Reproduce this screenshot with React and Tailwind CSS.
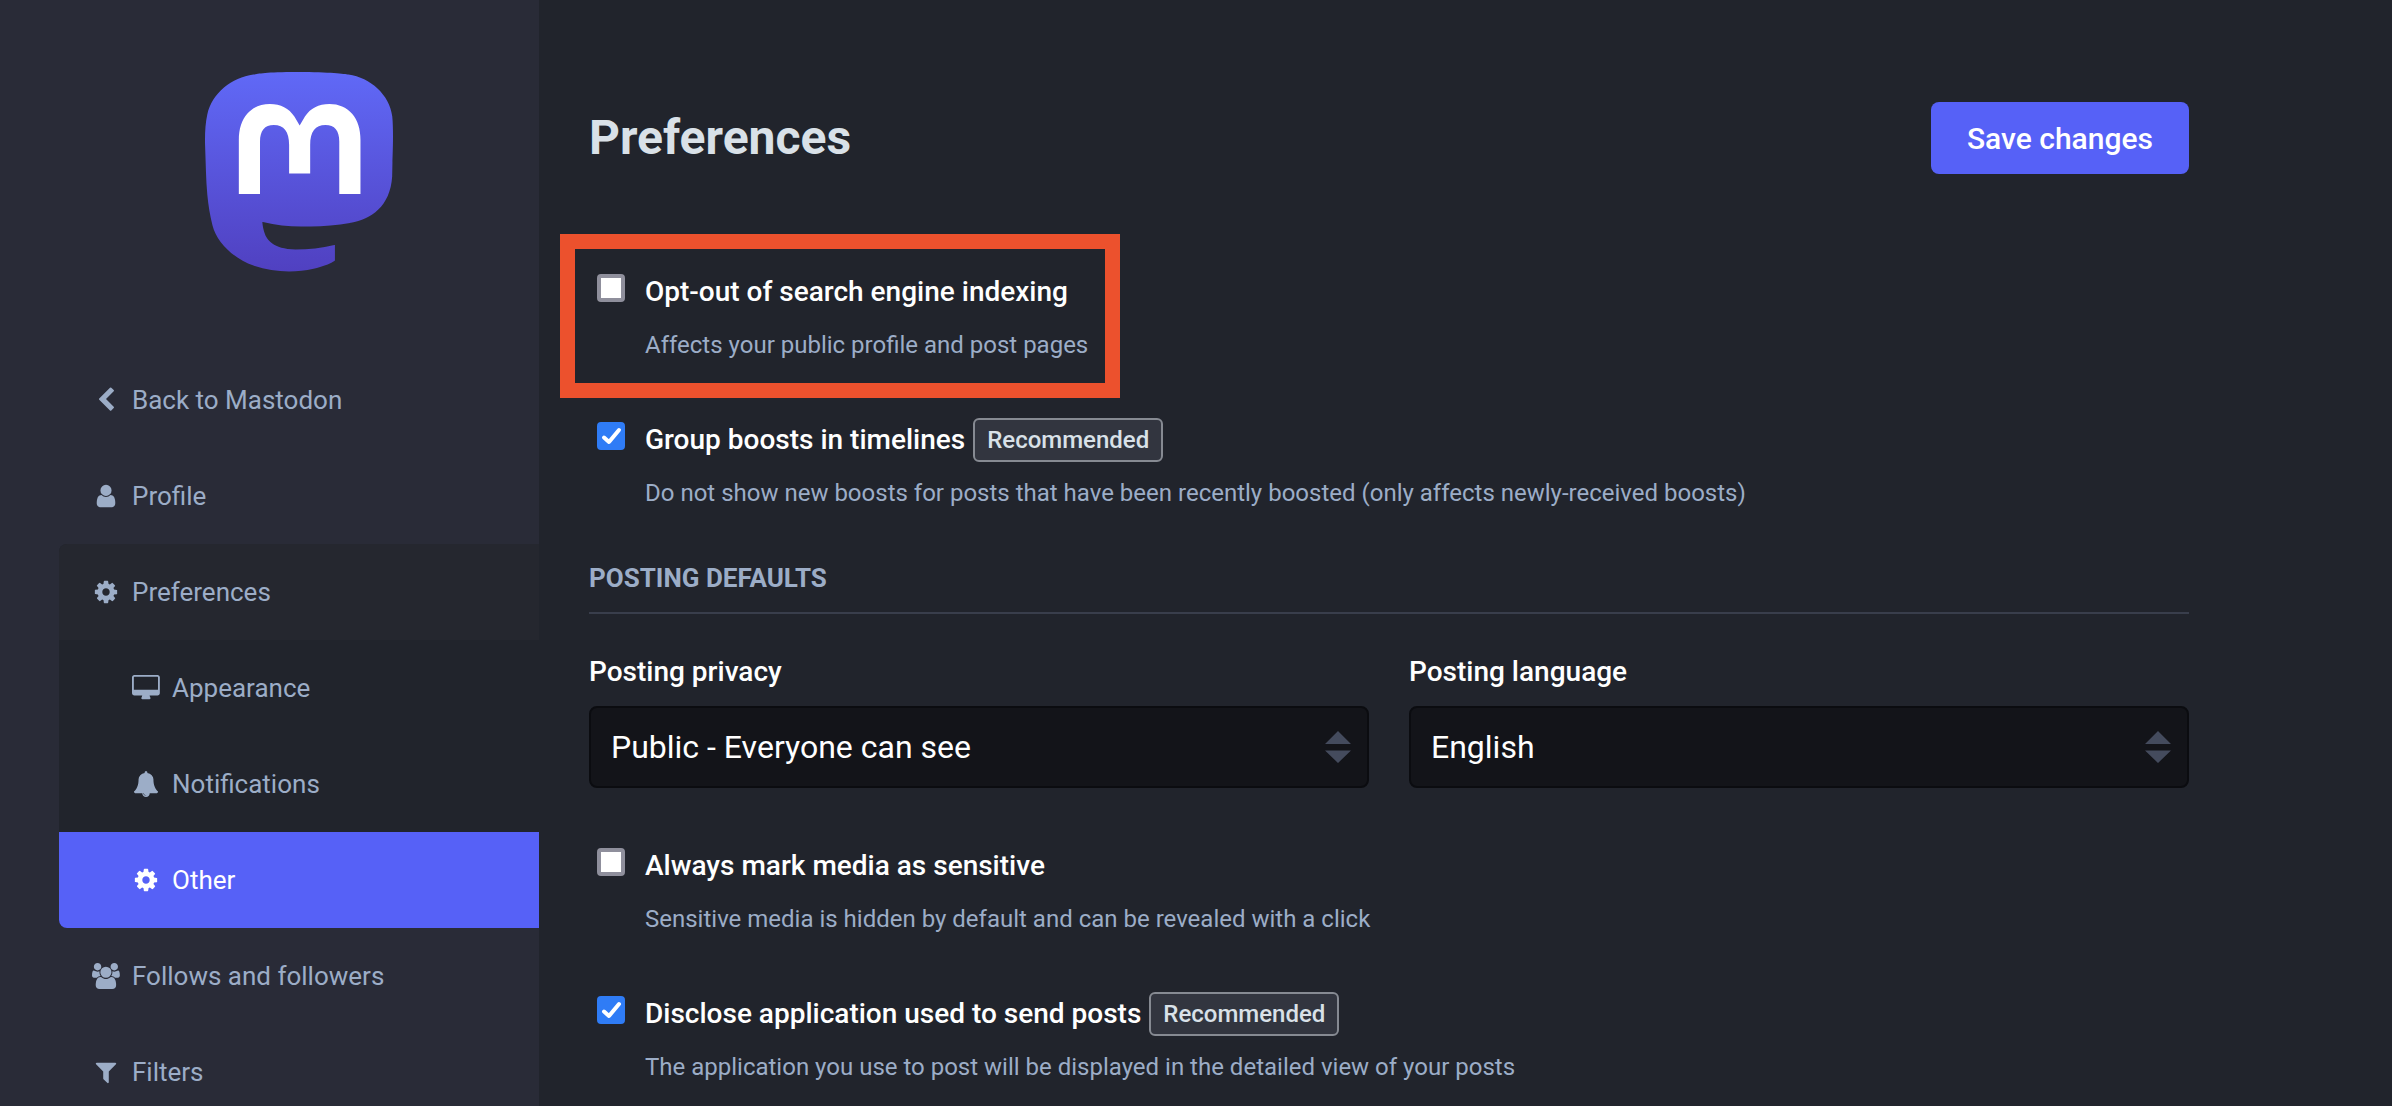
import { useId } from "react";

const icons = {
  back: {
    box: "0 0 1792 1792",
    d: "M1427 301l-531 531 531 531q19 19 19 45t-19 45l-166 166q-19 19-45 19t-45-19l-742-742q-19-19-19-45t19-45l742-742q19-19 45-19t45 19l166 166q19 19 19 45t-19 45z",
  },
  user: {
    box: "0 0 1792 1792",
    d: "M1536 1399q0 109-62.5 187t-150.5 78h-854q-88 0-150.5-78t-62.5-187q0-85 8.5-160.5t31.5-152 58.5-131 94-89 134.5-34.5q131 128 313 128t313-128q76 0 134.5 34.5t94 89 58.5 131 31.5 152 8.5 160.5zm-256-887q0 159-112.5 271.5t-271.5 112.5-271.5-112.5-112.5-271.5 112.5-271.5 271.5-112.5 271.5 112.5 112.5 271.5z",
  },
  cog: {
    box: "0 0 1792 1792",
    d: "M1152 896q0-106-75-181t-181-75-181 75-75 181 75 181 181 75 181-75 75-181zm512-109v222q0 12-8 23t-20 13l-185 28q-19 54-39 91 35 50 107 138 10 12 10 25t-9 23q-27 37-99 108t-94 71q-12 0-26-9l-138-108q-44 23-91 38-16 136-29 186-7 28-36 28h-222q-14 0-24.5-8.5t-11.5-21.5l-28-184q-49-16-90-37l-141 107q-10 9-25 9-14 0-25-11-126-114-165-168-7-10-7-23 0-12 8-23 15-21 51-66.5t54-70.5q-27-50-41-99l-183-27q-13-2-21-12.5t-8-23.5v-222q0-12 8-23t19-13l186-28q14-46 39-92-40-57-107-138-10-12-10-24 0-10 9-23 26-36 98.5-107.5t94.5-71.5q13 0 26 10l138 107q44-23 91-38 16-136 29-186 7-28 36-28h222q14 0 24.5 8.5t11.5 21.5l28 184q49 16 90 37l142-107q9-9 24-9 13 0 25 10 129 119 165 170 7 8 7 22 0 12-8 23-15 21-51 66.5t-54 70.5q26 50 41 98l183 28q13 2 21 12.5t8 23.5z",
  },
  desktop: {
    box: "-64 0 1920 1792",
    d: "M1728 992v-832q0-13-9.5-22.5t-22.5-9.5h-1600q-13 0-22.5 9.5t-9.5 22.5v832q0 13 9.5 22.5t22.5 9.5h1600q13 0 22.5-9.5t9.5-22.5zm128-832v1088q0 66-47 113t-113 47h-544q0 37 16 77.5t32 71 16 43.5q0 26-19 45t-45 19h-512q-26 0-45-19t-19-45q0-14 16-44t32-70 16-78h-544q-66 0-113-47t-47-113v-1088q0-66 47-113t113-47h1600q66 0 113 47t47 113z",
  },
  bell: {
    box: "0 0 1792 1792",
    d: "M912 1696q0-16-16-16-59 0-101.5-42.5t-42.5-101.5q0-16-16-16t-16 16q0 73 51.5 124.5t124.5 51.5q16 0 16-16zm816-288q0 52-38 90t-90 38h-448q0 106-75 181t-181 75-181-75-75-181h-448q-52 0-90-38t-38-90q50-42 91-88t85-119.5 74.5-158.5 50-206 19.5-260q0-152 117-282.5t307-158.5q-8-19-8-39 0-40 28-68t68-28 68 28 28 68q0 20-8 39 190 28 307 158.5t117 282.5q0 139 19.5 260t50 206 74.5 158.5 85 119.5 91 88z",
  },
  users: {
    box: "0 0 1920 1792",
    d: "M593 896q-162 5-265 128h-134q-82 0-138-40.5t-56-118.5q0-353 124-353 6 0 43.5 21t97.5 42.5 119 21.5q67 0 133-23-5 37-5 66 0 139 81 256zm1071 637q0 120-73 189.5t-194 69.5h-874q-121 0-194-69.5t-73-189.5q0-53 3.5-103.5t14-109 26.5-108.5 43-97.5 62-81 85.5-53.5 111.5-20q10 0 43 21.5t73 48 107 48 135 21.5 135-21.5 107-48 73-48 43-21.5q61 0 111.5 20t85.5 53.5 62 81 43 97.5 26.5 108.5 14 109 3.5 103.5zm-1024-1277q0 106-75 181t-181 75-181-75-75-181 75-181 181-75 181 75 75 181zm704 384q0 159-112.5 271.5t-271.5 112.5-271.5-112.5-112.5-271.5 112.5-271.5 271.5-112.5 271.5 112.5 112.5 271.5zm576 225q0 78-56 118.5t-138 40.5h-134q-103-123-265-128 81-117 81-256 0-29-5-66 66 23 133 23 59 0 119-21.5t97.5-42.5 43.5-21q124 0 124 353zm-128-609q0 106-75 181t-181 75-181-75-75-181 75-181 181-75 181 75 75 181z",
  },
  filter: {
    box: "0 0 1792 1792",
    d: "M1595 295q17 41-14 70l-493 493v742q0 42-39 59-13 5-25 5-27 0-45-19l-256-256q-19-19-19-45v-486l-493-493q-31-29-14-70 17-39 59-39h1280q42 0 59 39z",
  },
};

function Icon({ name }) {
  const { box, d } = icons[name];
  return (
    <span className="flex w-[34px] shrink-0 justify-center">
      <svg viewBox={box} className="h-[26px] w-auto" fill="currentColor" aria-hidden="true">
        <path d={d} />
      </svg>
    </span>
  );
}

function Logo() {
  return (
    <svg
      viewBox="0 0.16 74 78.2"
      preserveAspectRatio="none"
      className="h-[200px] w-[188px]"
      role="img"
      aria-label="Mastodon"
    >
      <defs>
        <linearGradient id="logo-fill" x1="37" y1="0" x2="37" y2="79" gradientUnits="userSpaceOnUse">
          <stop stopColor="#6069f7" />
          <stop offset="1" stopColor="#5040c0" />
        </linearGradient>
      </defs>
      <path
        fill="url(#logo-fill)"
        d="M73.7014 17.4323C72.5616 9.05152 65.1774 2.4469 56.424 1.1671C54.9472 0.950843 49.3518 0.163818 36.3901 0.163818H36.2933C23.3281 0.163818 20.5465 0.950843 19.0697 1.1671C10.56 2.41145 2.78877 8.34604 0.903306 16.826C-0.00357854 21.0022 -0.100361 25.6322 0.068112 29.8793C0.308275 35.9699 0.354874 42.0498 0.91406 48.1156C1.30064 52.1448 1.97502 56.1419 2.93215 60.0769C4.72441 67.3445 11.9795 73.3925 19.0876 75.86C26.6979 78.4332 34.8821 78.8603 42.724 77.0937C43.5866 76.8952 44.4398 76.6647 45.2833 76.4024C47.1867 75.8033 49.4199 75.1332 51.0616 73.9562C51.0841 73.9397 51.1026 73.9184 51.1156 73.8938C51.1286 73.8693 51.1359 73.8421 51.1368 73.8144V67.9366C51.1364 67.9107 51.1302 67.8852 51.1186 67.862C51.1069 67.8388 51.0902 67.8184 51.0695 67.8025C51.0489 67.7865 51.0249 67.7753 50.9994 67.7696C50.9738 67.764 50.9473 67.7641 50.9218 67.7699C45.8976 68.9569 40.7491 69.5519 35.5836 69.5425C26.694 69.5425 24.3031 65.3699 23.6184 63.6327C23.0681 62.1314 22.7186 60.5654 22.5789 58.9744C22.5775 58.9477 22.5825 58.921 22.5934 58.8965C22.6043 58.8721 22.621 58.8505 22.6419 58.8336C22.6629 58.8167 22.6876 58.8049 22.714 58.7992C22.7404 58.7934 22.7678 58.794 22.794 58.8007C27.7345 59.9796 32.799 60.5746 37.8813 60.5733C39.1036 60.5733 40.3223 60.5733 41.5447 60.5414C46.6562 60.3996 52.0437 60.1408 57.0728 59.1694C57.1983 59.1446 57.3237 59.1233 57.4313 59.0914C65.3638 57.5847 72.9128 52.8555 73.6799 40.8799C73.7086 40.4084 73.7803 35.9415 73.7803 35.4523C73.7839 33.7896 74.3216 23.6576 73.7014 17.4323Z"
      />
      <path
        fill="#fff"
        transform="translate(-0.3 -0.06) scale(1 1.0127)"
        d="M61.4925 47.3144H53.1514V27.107C53.1514 22.8528 51.3591 20.6832 47.7136 20.6832C43.7061 20.6832 41.6988 23.2499 41.6988 28.3194V39.3803H33.4078V28.3194C33.4078 23.2499 31.3969 20.6832 27.3894 20.6832C23.7654 20.6832 21.9552 22.8528 21.9516 27.107V47.3144H13.6176V26.4937C13.6176 22.2395 14.7157 18.8598 16.9118 16.3545C19.1772 13.8552 22.1488 12.5719 25.8373 12.5719C30.1064 12.5719 33.3325 14.1955 35.4832 17.4394L37.5587 20.8853L39.6377 17.4394C41.7884 14.1955 45.0145 12.5719 49.2765 12.5719C52.9614 12.5719 55.9329 13.8552 58.2055 16.3545C60.4017 18.8574 61.4997 22.2371 61.4997 26.4937L61.4925 47.3144Z"
      />
    </svg>
  );
}

function NavLink({ icon, children, className = "pl-[30px] text-[#9cadc7]" }) {
  return (
    <a href="#" className={`flex items-center gap-[9px] py-[30px] pr-[30px] text-[26px] leading-[36px] ${className}`}>
      <Icon name={icon} />
      {children}
    </a>
  );
}

function Sidebar() {
  return (
    <aside className="w-[539px] shrink-0 bg-[#292b37] pt-[72px] pl-[59px]">
      <a href="#" className="mb-20 flex justify-center">
        <Logo />
      </a>
      <nav>
        <ul>
          <li><NavLink icon="back">Back to Mastodon</NavLink></li>
          <li><NavLink icon="user">Profile</NavLink></li>
          <li className="overflow-hidden rounded-l-lg bg-[#21242c]">
            <NavLink icon="cog" className="bg-[#25272f] pl-[30px] text-[#9cadc7]">Preferences</NavLink>
            <ul>
              <li><NavLink icon="desktop" className="pl-[70px] text-[#9cadc7]">Appearance</NavLink></li>
              <li><NavLink icon="bell" className="pl-[70px] text-[#9cadc7]">Notifications</NavLink></li>
              <li><NavLink icon="cog" className="bg-[#5661f7] pl-[70px] text-white">Other</NavLink></li>
            </ul>
          </li>
          <li><NavLink icon="users">Follows and followers</NavLink></li>
          <li><NavLink icon="filter">Filters</NavLink></li>
        </ul>
      </nav>
    </aside>
  );
}

function CheckRow({ label, hint, checked = false, recommended = false, highlighted = false }) {
  const id = useId();
  return (
    <div className="relative flex w-fit gap-5 pl-2">
      {highlighted && (
        <span className="pointer-events-none absolute -top-9 -right-8 -bottom-[35px] -left-[29px] border-[15px] border-[#ec512d]" />
      )}
      <span className="mt-1 grid h-7 w-7 shrink-0">
        <input
          id={id}
          type="checkbox"
          defaultChecked={checked}
          aria-describedby={`${id}-hint`}
          className="peer col-start-1 row-start-1 h-7 w-7 appearance-none rounded-sm border-4 border-[#8f8f9c] bg-white checked:border-[#2f7cf6] checked:bg-[#2f7cf6]"
        />
        <svg
          viewBox="0 0 28 28"
          className="pointer-events-none col-start-1 row-start-1 hidden h-7 w-7 peer-checked:block"
          fill="none"
          stroke="#fff"
          strokeWidth="4"
          strokeLinecap="round"
          strokeLinejoin="round"
          aria-hidden="true"
        >
          <path d="M7 15.500L12 20L22 8" />
        </svg>
      </span>
      <div>
        <label htmlFor={id} className="flex h-11 items-center gap-2 text-[28px] font-medium text-white">
          {label}
          {recommended && (
            <span className="rounded-md border-2 border-[#868a92] bg-[#32353f] px-3 text-2xl leading-[40px] text-[#d9e1e8]">
              Recommended
            </span>
          )}
        </label>
        <p id={`${id}-hint`} className="mt-[13px] text-2xl leading-[36px] text-[#9cadc7]">{hint}</p>
      </div>
    </div>
  );
}

function SelectField({ label, options }) {
  const id = useId();
  return (
    <div className="flex flex-1 flex-col gap-4">
      <label htmlFor={id} className="text-[28px] leading-[36px] font-medium text-white">{label}</label>
      <div className="relative">
        <select
          id={id}
          className="h-[82px] w-full appearance-none rounded-lg border-2 border-[#0b0c10] bg-[#131419] pr-[60px] pl-5 text-[32px] text-white"
        >
          {options.map((option) => (
            <option key={option}>{option}</option>
          ))}
        </select>
        <svg
          viewBox="0 0 26 32"
          className="pointer-events-none absolute inset-y-0 right-[18px] my-auto h-8 w-[26px]"
          fill="#444b5d"
          aria-hidden="true"
        >
          <path d="M13 0L26 13H0ZM0 19.500H26L13 32Z" />
        </svg>
      </div>
    </div>
  );
}

export default function App() {
  return (
    <div className="flex h-screen overflow-hidden bg-[#21242c] font-['Roboto',sans-serif]">
      <Sidebar />
      <main className="min-w-0 max-w-[1700px] flex-1 px-[50px] pt-[102px]">
        <header className="flex items-center justify-between">
          <h1 className="text-5xl leading-[72px] font-bold text-[#d9e1e8]">Preferences</h1>
          <button type="submit" form="preferences" className="h-[72px] rounded-lg bg-[#5661f7] px-9 text-[30px] font-medium text-white">
            Save changes
          </button>
        </header>
        <form id="preferences" className="mt-24">
          <div className="flex flex-col gap-[55px]">
            <CheckRow
              highlighted
              label="Opt-out of search engine indexing"
              hint="Affects your public profile and post pages"
            />
            <CheckRow
              checked
              recommended
              label="Group boosts in timelines"
              hint="Do not show new boosts for posts that have been recently boosted (only affects newly-received boosts)"
            />
          </div>
          <h2 className="mt-[49px] border-b-2 border-[#393e4c] pb-4 text-[26px] leading-[36px] font-bold text-[#9cadc7] uppercase">
            Posting defaults
          </h2>
          <div className="mt-10 flex gap-10">
            <SelectField label="Posting privacy" options={["Public - Everyone can see"]} />
            <SelectField label="Posting language" options={["English"]} />
          </div>
          <div className="mt-14 flex flex-col gap-[55px]">
            <CheckRow
              label="Always mark media as sensitive"
              hint="Sensitive media is hidden by default and can be revealed with a click"
            />
            <CheckRow
              checked
              recommended
              label="Disclose application used to send posts"
              hint="The application you use to post will be displayed in the detailed view of your posts"
            />
          </div>
        </form>
      </main>
    </div>
  );
}
